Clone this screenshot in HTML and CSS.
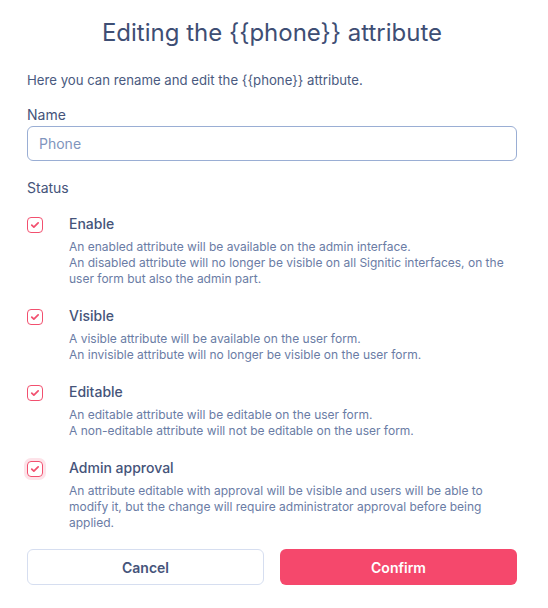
FILE: index.html
```html
<!DOCTYPE html>
<html lang="en">
<head>
    <meta charset="UTF-8">
    <title>Edit attribute</title>
    <link rel="stylesheet" href="styles.css">
</head>
<body>
    <div class="modal">
        <h1 class="title">Editing the {{phone}} attribute</h1>
        <p class="intro">Here you can rename and edit the {{phone}} attribute.</p>

        <label class="field-label" for="name">Name</label>
        <input class="text-input" type="text" id="name" placeholder="Phone">

        <div class="section-label">Status</div>

        <div class="option">
            <span class="check"><svg viewBox="0 0 16 16" width="16" height="16"><path d="M4.3 8.1l2.4 2.3 4.9-4.8"/></svg></span>
            <div class="option-body">
                <div class="option-title">Enable</div>
                <div class="option-desc">An enabled attribute will be available on the admin interface.<br>An disabled attribute will no longer be visible on all Signitic interfaces, on the user form but also the admin part.</div>
            </div>
        </div>

        <div class="option">
            <span class="check"><svg viewBox="0 0 16 16" width="16" height="16"><path d="M4.3 8.1l2.4 2.3 4.9-4.8"/></svg></span>
            <div class="option-body">
                <div class="option-title">Visible</div>
                <div class="option-desc">A visible attribute will be available on the user form.<br>An invisible attribute will no longer be visible on the user form.</div>
            </div>
        </div>

        <div class="option">
            <span class="check"><svg viewBox="0 0 16 16" width="16" height="16"><path d="M4.3 8.1l2.4 2.3 4.9-4.8"/></svg></span>
            <div class="option-body">
                <div class="option-title">Editable</div>
                <div class="option-desc">An editable attribute will be editable on the user form.<br>A non-editable attribute will not be editable on the user form.</div>
            </div>
        </div>

        <div class="option">
            <span class="check focused"><svg viewBox="0 0 16 16" width="16" height="16"><path d="M4.3 8.1l2.4 2.3 4.9-4.8"/></svg></span>
            <div class="option-body">
                <div class="option-title">Admin approval</div>
                <div class="option-desc">An attribute editable with approval will be visible and users will be able to modify it, but the change will require administrator approval before being applied.</div>
            </div>
        </div>

        <div class="actions">
            <button class="btn btn-cancel">Cancel</button>
            <button class="btn btn-confirm">Confirm</button>
        </div>
    </div>
</body>
</html>
```

FILE: styles.css
```css
* { box-sizing: border-box; }
body {
    margin: 0;
    background: #fff;
    font-family: Inter, "Noto Sans", sans-serif;
    color: #3f4d6f;
}
.modal {
    width: 548px;
    padding: 18px 31px 0 27px;
}
.title {
    margin: 0;
    text-align: center;
    font-size: 24px;
    font-weight: 400;
    line-height: 30px;
    color: #3e4e74;
}
.intro {
    margin: 23px 0 0;
    font-size: 13.2px;
    line-height: 18px;
    color: #4a5a80;
}
.field-label {
    display: block;
    margin-top: 17px;
    font-size: 14px;
    line-height: 18px;
    color: #45547a;
}
.text-input {
    display: block;
    width: 100%;
    height: 35px;
    margin-top: 2px;
    padding: 0 11px;
    border: 1px solid #9aaed4;
    border-radius: 6px;
    font-family: inherit;
    font-size: 14px;
    color: #3f4d6f;
    outline: none;
}
.text-input::placeholder { color: #7f95bd; }
.section-label {
    margin-top: 18px;
    font-size: 14px;
    line-height: 18px;
    color: #45547a;
}
.option {
    display: flex;
    align-items: flex-start;
    margin-top: 16px;
}
.option + .option { margin-top: 18px; }
.check {
    flex: none;
    width: 16px;
    height: 16px;
    margin-top: 4px;
    border: 1.5px solid #f2506f;
    border-radius: 4px;
    display: flex;
    align-items: center;
    justify-content: center;
}
.check svg {
    fill: none;
    stroke: #f2506f;
    stroke-width: 2;
    stroke-linecap: round;
    stroke-linejoin: round;
}
.check.focused { box-shadow: 0 0 0 3px #fde3e9; }
.option-body {
    flex: 1;
    margin-left: 26px;
}
.option-title {
    font-size: 14px;
    line-height: 22px;
    font-weight: 500;
    color: #45547a;
}
.option-desc {
    margin-top: 4px;
    font-size: 12px;
    line-height: 16px;
    color: #6a7ca5;
}
.actions {
    display: grid;
    grid-template-columns: 1fr 1fr;
    gap: 16px;
    margin-top: 18px;
}
.btn {
    height: 36px;
    border-radius: 6px;
    font-family: inherit;
    font-size: 14px;
    font-weight: 600;
    cursor: pointer;
}
.btn-cancel {
    background: #fff;
    border: 1px solid #d6def0;
    color: #45547a;
}
.btn-confirm {
    background: #f5486c;
    border: none;
    color: #fff;
}
```
